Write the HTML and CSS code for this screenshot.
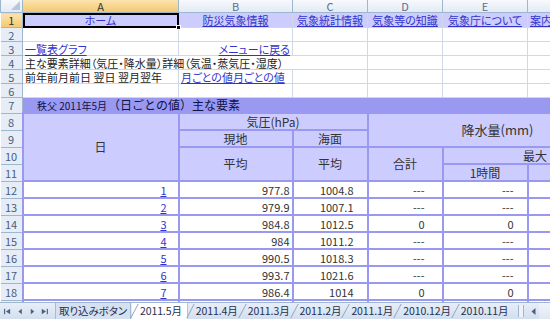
FILE: index.html
```html
<!DOCTYPE html>
<html lang="ja">
  <head>
    <meta charset="UTF-8" />
    <title>秩父 2011年5月（日ごとの値）主な要素</title>
    <link rel="stylesheet" href="styles.css">
  </head>
  <body>
    <div class="book">
      <div class="sheet">
        <table class="grid">
          <colgroup>
            <col class="c-rh" /><col class="c-a" /><col class="c-b" /><col class="c-c" /><col class="c-d" /><col class="c-e" /><col class="c-f" />
          </colgroup>
          <thead>
            <tr class="colhead">
              <th class="corner"><span class="tri"></span></th>
              <th class="on">A</th><th>B</th><th>C</th><th>D</th><th>E</th><th>F</th>
            </tr>
          </thead>
          <tbody>
            <tr class="r1">
              <th class="rh on">1</th>
              <td class="menu active"><a href="#">ホーム</a><span class="handle"></span></td>
              <td class="menu"><a href="#">防災気象情報</a></td>
              <td class="menu"><a href="#">気象統計情報</a></td>
              <td class="menu"><a href="#">気象等の知識</a></td>
              <td class="menu"><a href="#">気象庁について</a></td>
              <td class="menu left"><a href="#">案内</a></td>
            </tr>
            <tr class="rs">
              <th class="rh">2</th><td></td><td></td><td></td><td></td><td></td><td></td>
            </tr>
            <tr class="rs">
              <th class="rh">3</th>
              <td><a href="#">一覧表グラフ</a></td>
              <td class="right"><a href="#">メニューに戻る</a></td>
              <td></td><td></td><td></td><td></td>
            </tr>
            <tr class="rs">
              <th class="rh">4</th>
              <td colspan="3" class="plain">主な要素詳細（気圧・降水量）詳細（気温・蒸気圧・湿度）</td>
              <td></td><td></td><td></td>
            </tr>
            <tr class="rs">
              <th class="rh">5</th>
              <td class="plain">前年前月前日 翌日 翌月翌年</td>
              <td><a href="#">月ごとの値月ごとの値</a></td>
              <td></td><td></td><td></td><td></td>
            </tr>
            <tr class="rs">
              <th class="rh">6</th><td></td><td></td><td></td><td></td><td></td><td></td>
            </tr>
            <tr class="r7">
              <th class="rh">7</th>
              <td colspan="6" class="band"><small>秩父 2011年5月</small>（日ごとの値）主な要素</td>
            </tr>
            <tr class="rt">
              <th class="rh">8</th>
              <td rowspan="4" class="hd">日</td>
              <td colspan="2" class="hd">気圧(hPa)</td>
              <td colspan="3" rowspan="2" class="hd big">降水量(mm)</td>
            </tr>
            <tr class="rt">
              <th class="rh">9</th>
              <td class="hd">現地</td>
              <td class="hd">海面</td>
            </tr>
            <tr class="rt">
              <th class="rh">10</th>
              <td rowspan="2" class="hd">平均</td>
              <td rowspan="2" class="hd">平均</td>
              <td rowspan="2" class="hd">合計</td>
              <td colspan="2" class="hd">最大</td>
            </tr>
            <tr class="rt">
              <th class="rh">11</th>
              <td class="hd">1時間</td>
              <td class="hd"></td>
            </tr>
            <tr class="rt">
              <th class="rh">12</th>
              <td class="day"><a href="#">1</a></td><td class="p">977.8</td><td class="s">1004.8</td><td class="t">---</td><td class="m">---</td><td></td>
            </tr>
            <tr class="rt">
              <th class="rh">13</th>
              <td class="day"><a href="#">2</a></td><td class="p">979.9</td><td class="s">1007.1</td><td class="t">---</td><td class="m">---</td><td></td>
            </tr>
            <tr class="rt">
              <th class="rh">14</th>
              <td class="day"><a href="#">3</a></td><td class="p">984.8</td><td class="s">1012.5</td><td class="t">0</td><td class="m">0</td><td></td>
            </tr>
            <tr class="rt">
              <th class="rh">15</th>
              <td class="day"><a href="#">4</a></td><td class="p">984</td><td class="s">1011.2</td><td class="t">---</td><td class="m">---</td><td></td>
            </tr>
            <tr class="rt">
              <th class="rh">16</th>
              <td class="day"><a href="#">5</a></td><td class="p">990.5</td><td class="s">1018.3</td><td class="t">---</td><td class="m">---</td><td></td>
            </tr>
            <tr class="rt">
              <th class="rh">17</th>
              <td class="day"><a href="#">6</a></td><td class="p">993.7</td><td class="s">1021.6</td><td class="t">---</td><td class="m">---</td><td></td>
            </tr>
            <tr class="rt">
              <th class="rh">18</th>
              <td class="day"><a href="#">7</a></td><td class="p">986.4</td><td class="s">1014</td><td class="t">0</td><td class="m">0</td><td></td>
            </tr>
            <tr class="rt">
              <th class="rh">19</th>
              <td class="day"><a href="#">8</a></td><td class="p">981.9</td><td class="s">1009.7</td><td class="t">---</td><td class="m">---</td><td></td>
            </tr>
          </tbody>
        </table>
      </div>

      <div class="tabbar">
        <div class="tabnav">
          <svg width="9" height="7" viewBox="0 0 9 7"><rect x="0" y="0" width="1.5" height="7" /><path d="M8 0 L2.5 3.5 L8 7 Z" /></svg>
          <svg width="6" height="7" viewBox="0 0 6 7"><path d="M5 0 L0.5 3.5 L5 7 Z" /></svg>
          <svg width="6" height="7" viewBox="0 0 6 7"><path d="M1 0 L5.5 3.5 L1 7 Z" /></svg>
          <svg width="9" height="7" viewBox="0 0 9 7"><path d="M1 0 L6.5 3.5 L1 7 Z" /><rect x="7.5" y="0" width="1.5" height="7" /></svg>
        </div>
        <div class="tabs">
          <span class="tab first">取り込みボタン</span>
          <span class="tab current">2011.5月</span>
          <span class="tab">2011.4月</span>
          <span class="tab">2011.3月</span>
          <span class="tab">2011.2月</span>
          <span class="tab">2011.1月</span>
          <span class="tab">2010.12月</span>
          <span class="tab">2010.11月</span>
        </div>
        <div class="hscroll">
          <span class="split"></span>
          <span class="sbtn"><svg width="5" height="7" viewBox="0 0 5 7"><path d="M4.5 0 L0.5 3.5 L4.5 7 Z" /></svg></span>
          <span class="track"></span>
        </div>
      </div>
    </div>
  </body>
</html>
```

FILE: styles.css
```css
body {
  margin: 0;
  font-family: "Noto Sans CJK JP", "Noto Sans", sans-serif;
  font-size: 11px;
  color: #222;
  background-color: #fff;
  overflow: hidden;
}

.book {
  display: flex;
  flex-direction: column;
  width: 550px;
  height: 319px;
}

.sheet {
  flex: 1;
  overflow: hidden;
}

/* spreadsheet grid */

.grid {
  border-collapse: collapse;
  table-layout: fixed;
  width: 627px;
  font-feature-settings: "palt";
}

.c-rh { width: 22px; }
.c-a { width: 156px; }
.c-b { width: 114px; }
.c-c { width: 75px; }
.c-d { width: 75px; }
.c-e { width: 85px; }
.c-f { width: 100px; }

.grid td,
.grid th {
  padding: 0 2px;
  line-height: 12px;
  white-space: nowrap;
  border: 1px solid #d0d7e5;
  vertical-align: middle;
}

.grid a {
  color: #3333cc;
  text-decoration: underline;
}

.colhead th {
  height: 12px;
  font-weight: normal;
  font-size: 11px;
  color: #5b6e8c;
  text-align: center;
  background: linear-gradient(#f7f9fc, #e3eaf4);
  border-color: #9eb6ce;
  border-top: none;
  overflow: hidden;
}

.colhead th.on {
  background: linear-gradient(#fbe3ae, #f5c86e);
  color: #333;
}

.corner {
  position: relative;
}

.corner .tri {
  position: absolute;
  right: 2px;
  bottom: 2px;
  width: 0;
  height: 0;
  border-left: 9px solid transparent;
  border-bottom: 9px solid #b7c6da;
}

.rh {
  font-weight: normal;
  color: #4a5d7c;
  text-align: center;
  background-color: #e6edf6;
  border-color: #9eb6ce !important;
  border-left: none !important;
}

.rh.on {
  background: linear-gradient(#fbe3ae, #f5c86e);
  color: #333;
}

.r1 td,
.r1 th {
  height: 14px;
}

.rs td,
.rs th {
  height: 13px;
}

.menu {
  background-color: #ccccff;
  text-align: center;
  overflow: hidden;
}

.left {
  text-align: left;
}

.right {
  text-align: right;
}

.active {
  position: relative;
  outline: 2px solid #000;
  outline-offset: -2px;
  overflow: visible;
}

.handle {
  position: absolute;
  right: -3px;
  bottom: -3px;
  width: 5px;
  height: 5px;
  background-color: #000;
  border: 1px solid #fff;
  box-sizing: border-box;
}

.plain {
  color: #222;
}

.r7 td,
.r7 th {
  height: 14px;
}

.band {
  background-color: #9999f2;
  color: #111144;
  font-size: 12px;
  font-feature-settings: normal;
  padding-left: 14px !important;
  border-color: #9999f2 !important;
}

.band small {
  font-size: 10px;
  margin-right: 1px;
}

/* data table part */

.rt td,
.rt th {
  height: 15px;
}

.rt td {
  border: 2px solid #9999f2;
  color: #333;
  text-align: right;
  overflow: hidden;
}

.rt td.hd {
  background-color: #ccccff;
  text-align: center;
  font-size: 12px;
  color: #333;
}

.rt td.big {
  font-size: 13px;
}

.rt td.day {
  padding-right: 11px;
  line-height: 14px;
}

.rt td.p {
  padding-right: 2px;
}

.rt td.s {
  padding-right: 13px;
}

.rt td.t {
  padding-right: 17px;
}

.rt td.m {
  padding-right: 13px;
}

/* sheet tabs */

.tabbar {
  display: flex;
  align-items: stretch;
  height: 16px;
  background: linear-gradient(#e7eef8, #d3dfee);
  border-top: 1px solid #9eb6ce;
  font-size: 10.5px;
  color: #1e3050;
  font-feature-settings: "palt";
}

.tabnav {
  display: flex;
  align-items: center;
  gap: 7px;
  padding: 0 4px 0 4px;
  width: 44px;
}

.tabnav svg {
  fill: #4d6185;
}

.tabs {
  display: flex;
  align-items: stretch;
  flex: 1;
  overflow: hidden;
}

.tab {
  position: relative;
  padding: 0 2px 0 8px;
  line-height: 15px;
  white-space: nowrap;
  letter-spacing: -0.1px;
}

.tab::before {
  content: "";
  position: absolute;
  left: 2px;
  top: 1px;
  width: 1px;
  height: 14px;
  background-color: #8fa5c2;
  transform: skewX(-28deg);
}

.tab.first {
  padding: 0 3px;
  margin: 0 1px 0 3px;
  background-color: #d5e1f0;
  border-left: 1px solid #a7b9d0;
  border-right: 1px solid #a7b9d0;
}

.tab.first::before {
  display: none;
}

.tab.current {
  background-color: #fff;
  padding-right: 5px;
  border-right: 1px solid #b5c5da;
}

.hscroll {
  display: flex;
  align-items: stretch;
  width: 32px;
}

.split {
  width: 4px;
  margin: 2px 3px 2px 0;
  border-left: 1px solid #9eb6ce;
  border-right: 1px solid #9eb6ce;
  background-color: #eef2f8;
}

.sbtn {
  display: flex;
  align-items: center;
  justify-content: center;
  width: 12px;
}

.sbtn svg {
  fill: #4d6185;
}

.track {
  flex: 1;
  background: linear-gradient(#f1f4f9, #dfe7f2);
}
```
